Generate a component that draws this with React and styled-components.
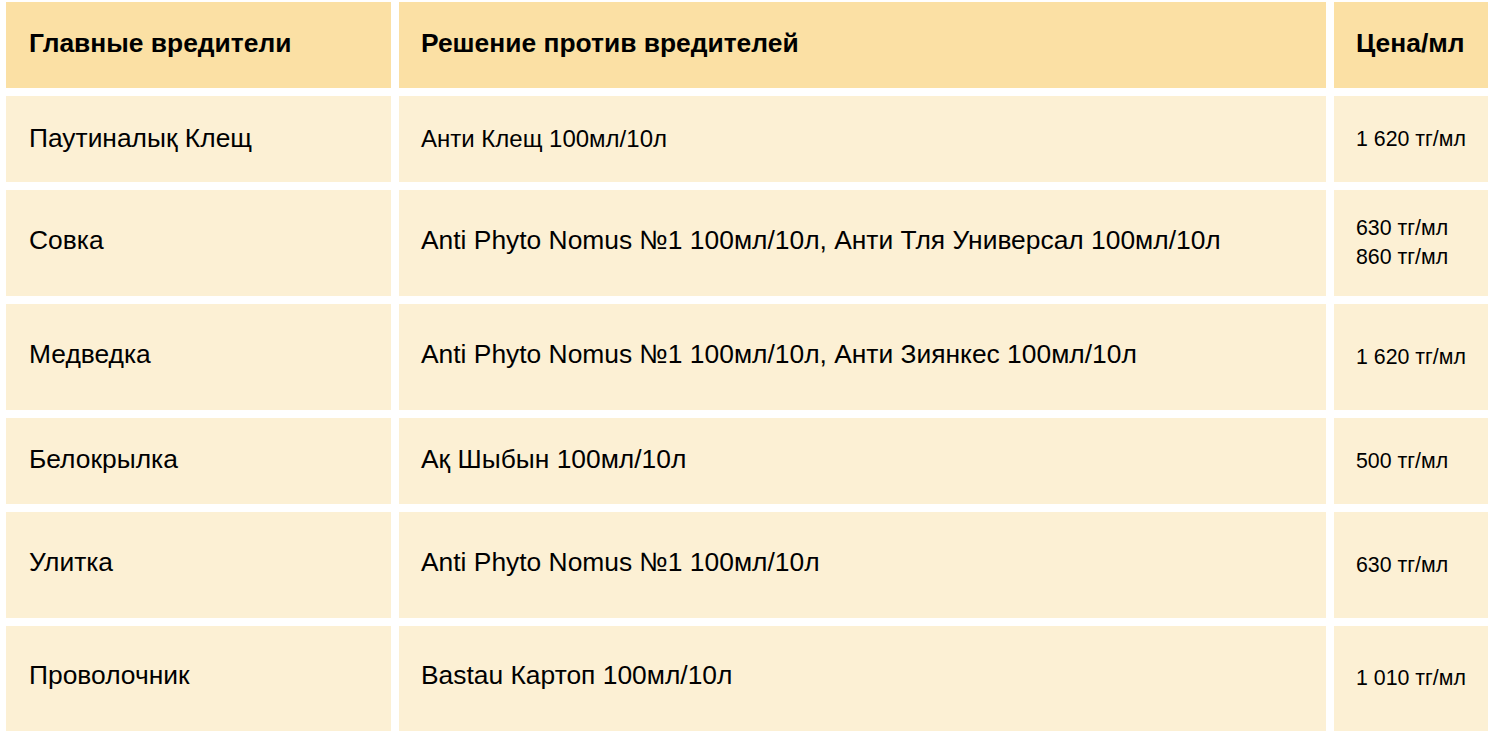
import React from 'react'
import styled, { createGlobalStyle } from 'styled-components'

const GlobalStyle = createGlobalStyle`
  body {
    margin: 0;
    background: #ffffff;
    font-family: "Liberation Sans", Arial, sans-serif;
    color: #000000;
  }
`

const Table = styled.div`
  display: grid;
  grid-template-columns: 385px 927px 154px;
  column-gap: 8px;
  row-gap: 8px;
  padding: 2px 6px 6px;
`

const Cell = styled.div`
  display: flex;
  flex-direction: column;
  justify-content: center;
  height: ${p => p.h}px;
  padding: 0 8px ${p => p.pb || 0}px ${p => p.pl || 23}px;
  background: ${p => (p.head ? '#fbe0a4' : '#fcf0d4')};
  font-size: ${p => p.size || 26.4}px;
  font-weight: ${p => (p.head ? 700 : 400)};
  line-height: ${p => (p.size === 21.33 ? '29px' : '1.2')};
  white-space: nowrap;
  box-sizing: border-box;
`

const rows = [
  { h: 86, pb: 0, pest: 'Паутиналық Клещ', fix: 'Анти Клещ 100мл/10л', fixSize: 24, price: ['1 620 тг/мл'] },
  { h: 106, pb: 4, pest: 'Совка', fix: 'Anti Phyto Nomus №1 100мл/10л, Анти Тля Универсал 100мл/10л', price: ['630 тг/мл', '860 тг/мл'] },
  { h: 106, pb: 4, pest: 'Медведка', fix: 'Anti Phyto Nomus №1 100мл/10л, Анти Зиянкес 100мл/10л', price: ['1 620 тг/мл'] },
  { h: 86, pb: 3, pest: 'Белокрылка', fix: 'Ақ Шыбын 100мл/10л', price: ['500 тг/мл'] },
  { h: 106, pb: 5, pest: 'Улитка', fix: 'Anti Phyto Nomus №1 100мл/10л', price: ['630 тг/мл'] },
  { h: 105, pb: 6, pest: 'Проволочник', fix: 'Bastau Картоп 100мл/10л', price: ['1 010 тг/мл'] },
]

const App = () => {
  return (
    <>
      <GlobalStyle />
      <Table>
        <Cell head h={86} pb={2}>Главные вредители</Cell>
        <Cell head h={86} pb={2} pl={22}>Решение против вредителей</Cell>
        <Cell head h={86} pb={2} pl={22}>Цена/мл</Cell>
        {rows.map((r, i) => (
          <React.Fragment key={i}>
            <Cell h={r.h} pb={r.pb}>{r.pest}</Cell>
            <Cell h={r.h} pb={r.pb} pl={22} size={r.fixSize}>{r.fix}</Cell>
            <Cell h={r.h} pl={22} size={21.33}>
              {r.price.map(p => <div key={p}>{p}</div>)}
            </Cell>
          </React.Fragment>
        ))}
      </Table>
    </>
  )
}

export default App
